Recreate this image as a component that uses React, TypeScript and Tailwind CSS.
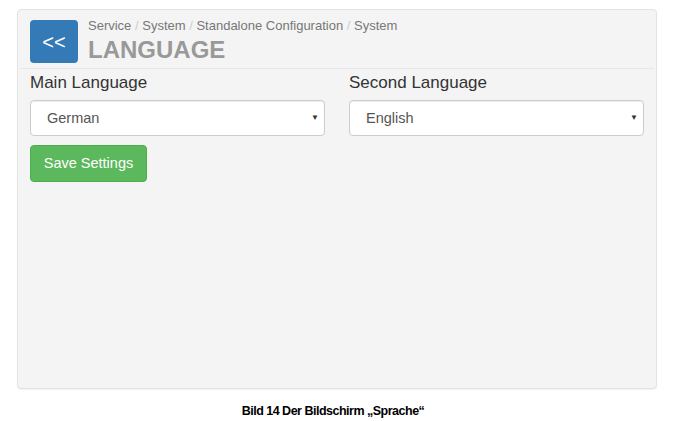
import { useState } from 'react';

const languages = ['German', 'English', 'French', 'Italian', 'Spanish'];

function LanguageSelect({ label, value }: { label: string; value: string }) {
  return (
    <div className="flex flex-col">
      <label className="mt-[2px] text-[17px] leading-[24px] text-[#333]">{label}</label>
      <div className="relative mt-[5px] h-[36px] rounded-[4px] border border-[#ccc] bg-white shadow-[inset_0_1px_1px_rgba(0,0,0,0.075)]">
        <span className="absolute left-[16px] top-0 text-[14.5px] leading-[34px] text-[#555]">{value}</span>
        <span className="absolute right-[5px] top-[11px] text-[8px] leading-[12px] text-[#333]">▼</span>
      </div>
    </div>
  );
}

export default function App() {
  const [main] = useState(languages[0]);
  const [second] = useState(languages[1]);

  return (
    <div className="min-h-[421px] w-[682px] bg-white pt-[9px] font-['Liberation_Sans',Arial,sans-serif]">
      <div className="ml-[17px] h-[380px] w-[640px] rounded-[4px] border border-[#e3e3e3] bg-[#f4f4f4] px-[12px] pt-[10px] shadow-[0_1px_1px_rgba(0,0,0,0.05)]">
        {/* header */}
        <div className="flex items-start gap-[10px]">
          <button className="flex h-[43px] w-[48px] items-center justify-center rounded-[4px] bg-[#337ab7] text-[20px] leading-none text-white">
            &lt;&lt;
          </button>
          <div className="-mt-[2px] flex flex-col">
            <div className="text-[13px] leading-[16px] text-[#777]">
              Service <span className="text-[#ccc]">/</span> System <span className="text-[#ccc]">/</span> Standalone Configuration <span className="text-[#ccc]">/</span> System
            </div>
            <h1 className="mt-[2px] text-[24px] font-bold leading-[28px] text-[#999]">LANGUAGE</h1>
          </div>
        </div>
        <div className="-mx-[10px] mt-[4px] h-px bg-[#e8e8e8]" />

        {/* selects */}
        <div className="grid grid-cols-2 gap-x-6">
          <LanguageSelect label="Main Language" value={main} />
          <LanguageSelect label="Second Language" value={second} />
        </div>

        <button className="mt-[9px] h-[37px] w-[117px] rounded-[4px] border border-[#4cae4c] bg-[#5cb85c] text-[14.5px] text-white">
          Save Settings
        </button>
      </div>

      <p className="ml-[17px] mt-[14px] w-[632px] text-center text-[12.5px] font-bold leading-[16px] tracking-[-0.5px] text-black">
        Bild 14 Der Bildschirm „Sprache“
      </p>
    </div>
  );
}
